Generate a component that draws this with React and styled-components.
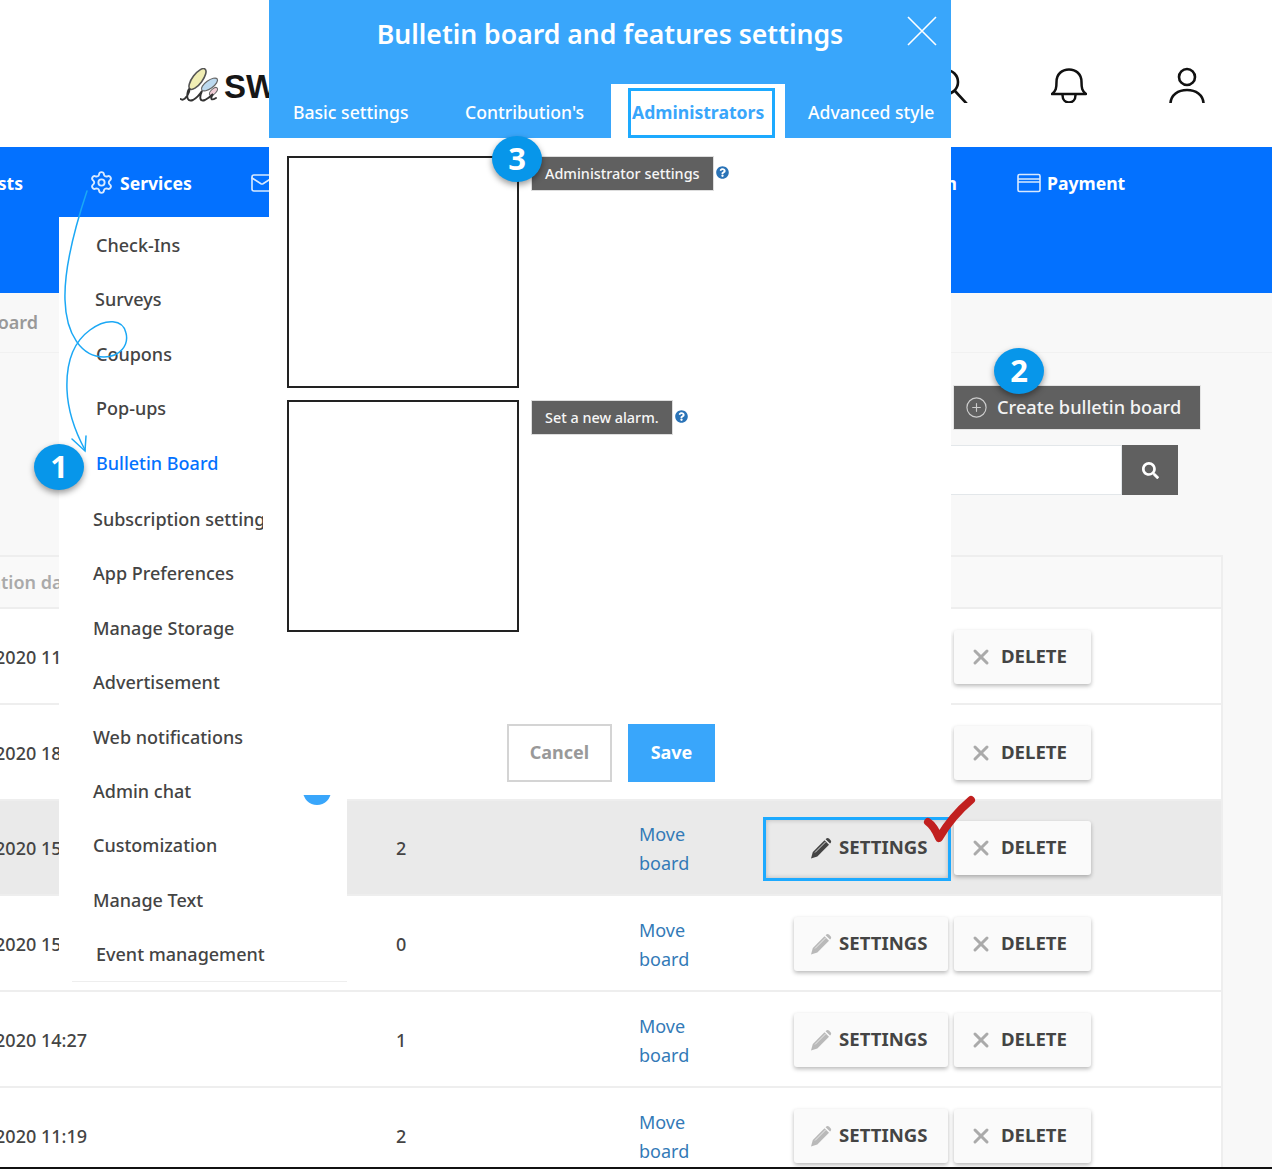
import React from "react";
import styled, { createGlobalStyle } from "styled-components";
import { Settings, Mail, CirclePlus, X } from "lucide-react";
import { FaQuestionCircle, FaSearch } from "react-icons/fa";

const Global = createGlobalStyle`
  html, body { margin: 0; padding: 0; background: #fff; }
  * { box-sizing: border-box; }
`;

const Page = styled.div`
  position: relative;
  width: 1272px;
  height: 1169px;
  overflow: hidden;
  display: flex;
  flex-direction: column;
  background: #f8f8f8;
  font-family: "Noto Sans", "Open Sans", sans-serif;
  font-weight: 500;
  font-size: 18px;
  color: #444;
  border-bottom: 2px solid #111;
`;

const Header = styled.header`
  flex: 0 0 147px;
  background: #fff;
  display: flex;
  align-items: flex-start;
  padding: 67px 67px 0 180px;
`;
const Logo = styled.div`
  display: flex;
  align-items: center;
  margin-top: -1px;
`;
const LogoText = styled.span`
  font-family: "Liberation Sans", sans-serif;
  font-size: 33px;
  line-height: 36px;
  font-weight: 700;
  color: #161616;
  margin-top: 3px;
  margin-left: -1px;
`;
const HeaderIcons = styled.div`
  margin-left: auto;
  display: flex;
  gap: 82px;
  svg { display: block; }
`;

const Nav = styled.nav`
  flex: 0 0 146px;
  background: #0371ff;
  display: grid;
  grid-template-columns: 89px 161px 300px 407px auto;
  align-content: start;
  padding-top: 23.5px;
  color: #fff;
  font-weight: 700;
  font-size: 17.6px;
`;
const NavItem = styled.div`
  display: flex;
  align-items: center;
  gap: 6px;
  height: 24px;
  white-space: nowrap;
  justify-content: ${(p) => (p.$end ? "flex-end" : "flex-start")};
  width: ${(p) => p.$w || "auto"};
  margin-left: ${(p) => p.$ml || "0"};
  svg { flex: none; opacity: 0.85; }
`;

const Crumb = styled.div`
  flex: 0 0 60px;
  border-bottom: 1px solid #f1f1f1;
  display: flex;
  align-items: center;
  color: #999;
`;
const CrumbText = styled.div`
  width: 38px;
  display: flex;
  justify-content: flex-end;
  white-space: nowrap;
  margin-top: -1px;
  font-weight: 600;
`;

const Toolbar = styled.div`
  flex: 0 0 202px;
  display: flex;
  flex-direction: column;
  align-items: flex-end;
  padding-top: 32px;
`;
const CreateButton = styled.button`
  width: 248px;
  height: 45px;
  margin-right: 71px;
  background: #606060;
  border: 1px solid #e4e4e4;
  color: #f4f4f4;
  font: inherit;
  font-size: 18.2px;
  display: flex;
  align-items: center;
  gap: 9px;
  padding: 0 0 2px 11px;
  white-space: nowrap;
  svg { margin-top: 2px; }
`;
const SearchRow = styled.div`
  margin: 15px 94px 0 0;
  display: flex;
  height: 50px;
`;
const SearchInput = styled.div`
  width: 400px;
  background: #fff;
  border: 1px solid #e3e7ea;
`;
const SearchButton = styled.button`
  width: 56px;
  background: #606060;
  border: 0;
  color: #fff;
  display: flex;
  align-items: center;
  justify-content: center;
  padding: 0;
`;

const Table = styled.div`
  margin-right: 49px;
  border-right: 2px solid #eee;
  background: #fff;
`;
const HeadRow = styled.div`
  height: 54px;
  background: #f9f9f9;
  border-top: 2px solid #eee;
  border-bottom: 2px solid #eee;
  display: flex;
  align-items: center;
  color: #aaa;
  font-weight: 600;
`;
const HeadCell = styled.div`
  margin-left: -39px;
  margin-top: -1px;
  white-space: nowrap;
`;
const Row = styled.div`
  height: 95.75px;
  padding-top: 2px;
  display: grid;
  grid-template-columns: 396px 243px 60px 1fr;
  align-items: center;
  background: ${(p) => (p.$active ? "#eaeaea" : "#fff")};
  border-bottom: 2px solid #eee;
`;
const DateCell = styled.div`
  width: 87px;
  display: flex;
  justify-content: flex-end;
  white-space: nowrap;
`;
const MoveLink = styled.a`
  display: block;
  color: #337ab7;
  width: 60px;
  padding-top: 2px;
  line-height: 29px;
  font-weight: 400;
`;
const Actions = styled.div`
  justify-self: end;
  display: flex;
  gap: 6px;
  padding-right: 130px;
`;
const ActionButton = styled.button`
  position: relative;
  width: ${(p) => p.$w};
  height: 54px;
  background: ${(p) => (p.$outlined ? "transparent" : "#fafafa")};
  border: 0;
  border-radius: 3px;
  box-shadow: ${(p) => (p.$outlined ? "none" : "0 2px 4px rgba(0, 0, 0, 0.28)")};
  color: #444;
  font: inherit;
  font-weight: 700;
  font-size: 18.6px;
  display: flex;
  align-items: center;
  gap: ${(p) => p.$gap};
  padding: 0 0 3px ${(p) => p.$pad};
  white-space: nowrap;
  svg { flex: none; margin-top: 3px; }
  ${(p) =>
    p.$outlined &&
    `&::after {
      content: "";
      position: absolute;
      top: -4px;
      bottom: -6px;
      left: -31px;
      right: -3px;
      border: 3px solid #1daaff;
      box-shadow: inset 0 0 5px rgba(0, 0, 0, 0.22);
    }`}
`;

const Menu = styled.div`
  position: absolute;
  left: 59px;
  top: 217px;
  width: 288px;
  height: 765px;
  background: #fff;
  padding-top: 1px;
  &::after {
    content: "";
    position: absolute;
    left: 13px;
    right: 0;
    bottom: 0;
    height: 1px;
    background: #eee;
  }
`;
const MenuItem = styled.div`
  position: relative;
  height: 54.4px;
  line-height: 54.4px;
  padding-left: ${(p) => p.$indent}px;
  margin-top: ${(p) => p.$gap || 0}px;
  color: ${(p) => (p.$current ? "#0371ff" : "#444")};
  white-space: nowrap;
`;
const Clip = styled.span`
  display: inline-block;
  vertical-align: top;
  max-width: 170px;
  overflow: hidden;
`;
const MenuBadge = styled.span`
  position: absolute;
  right: 16px;
  top: 13px;
  width: 28px;
  height: 28px;
  border-radius: 50%;
  background: #39a6fb;
`;

const Modal = styled.section`
  position: absolute;
  left: 269px;
  top: 0;
  width: 682px;
  height: 795px;
  background: #fff;
  display: flex;
  flex-direction: column;
`;
const ModalHead = styled.div`
  position: relative;
  height: 138px;
  background: #39a6fb;
  color: #fff;
  display: flex;
  flex-direction: column;
  font-size: 17.6px;
`;
const ModalTitle = styled.h2`
  margin: 0;
  height: 84px;
  padding-top: 14px;
  font-size: 26.6px;
  line-height: 40px;
  font-weight: 600;
  text-align: center;
`;
const CloseIcon = styled.svg`
  position: absolute;
  top: 16px;
  right: 14px;
`;
const Tabs = styled.div`
  display: grid;
  grid-template-columns: 168px 174px 174px 166px;
  height: 54px;
`;
const Tab = styled.div`
  padding-left: ${(p) => p.$pad}px;
  line-height: 57px;
  white-space: nowrap;
`;
const ActiveTab = styled.div`
  background: #fff;
  padding: 4px 10px 0 17px;
`;
const ActiveTabBox = styled.div`
  height: 50px;
  border: 3px solid #1daaff;
  color: #39a6fb;
  font-weight: 700;
  line-height: 42px;
  white-space: nowrap;
  padding-left: 1px;
`;
const ModalBody = styled.div`
  padding: 18px 0 0 18px;
  display: flex;
  flex-direction: column;
  gap: 12px;
`;
const SettingRow = styled.div`
  display: flex;
  align-items: flex-start;
  gap: 12px;
`;
const EmptyBox = styled.div`
  width: 232px;
  height: 232px;
  border: 2px solid #222;
  background: #fff;
`;
const Chip = styled.div`
  height: 35px;
  background: #606060;
  border: 1px solid #ddd;
  color: #f6f6f6;
  font-size: 14.4px;
  font-weight: 500;
  line-height: 33px;
  padding: 0 13px;
  white-space: nowrap;
`;
const Help = styled.span`
  color: #2a73b7;
  margin: 10px 0 0 -10px;
  display: flex;
`;
const ModalFooter = styled.div`
  margin-top: 92px;
  padding-left: 2px;
  display: flex;
  justify-content: center;
  gap: 16px;
`;
const Cancel = styled.button`
  width: 105px;
  height: 58px;
  background: #fff;
  border: 2px solid #d4d4d4;
  color: #999;
  font: inherit;
  font-weight: 700;
  padding: 0 0 2px;
`;
const Save = styled.button`
  width: 87px;
  height: 58px;
  background: #39a6fb;
  border: 0;
  color: #fff;
  font: inherit;
  font-weight: 700;
  padding: 0 0 2px;
`;

const Step = styled.div`
  position: absolute;
  left: ${(p) => p.$x - 25}px;
  top: ${(p) => p.$y - 23}px;
  width: 50px;
  height: 46px;
  border-radius: 50%;
  background: #0796ea;
  box-shadow: 0 3px 6px rgba(0, 0, 0, 0.4);
  color: #fff;
  font-size: 31px;
  font-weight: 700;
  line-height: 44px;
  text-align: center;
`;
const Overlay = styled.svg`
  position: absolute;
  left: ${(p) => p.$x}px;
  top: ${(p) => p.$y}px;
  pointer-events: none;
`;

const rows = [
  { date: "2020 11:42", count: "3" },
  { date: "2020 18:06", count: "1" },
  { date: "2020 15:31", count: "2", active: true },
  { date: "2020 15:04", count: "0" },
  { date: "2020 14:27", count: "1" },
  { date: "2020 11:19", count: "2" },
];

const menu = [
  ["Check-Ins", 37],
  ["Surveys", 36],
  ["Coupons", 37],
  ["Pop-ups", 37],
  ["Bulletin Board", 37],
  ["Subscription settings", 34],
  ["App Preferences", 34],
  ["Manage Storage", 34],
  ["Advertisement", 34],
  ["Web notifications", 34],
  ["Admin chat", 34],
  ["Customization", 34],
  ["Manage Text", 34],
  ["Event management", 37],
];

const SearchGlyph = () => (
  <svg width="36" height="36" viewBox="0 0 36 36" fill="none" stroke="#111" strokeWidth="2.6" strokeLinecap="round">
    <circle cx="13" cy="15" r="12" />
    <path d="M22 24 L34 37" />
  </svg>
);
const Bell = () => (
  <svg width="36" height="36" viewBox="0 0 36 36" fill="none" stroke="#111" strokeWidth="2.5" strokeLinecap="round" strokeLinejoin="round">
    <path d="M1 27 H35 C31 24 30.5 21 30.5 15 C30.5 7 25 2.5 18 2.5 C11 2.5 5.5 7 5.5 15 C5.5 21 5 24 1 27 Z" />
    <path d="M11.5 28 C11.5 38 24.5 38 24.5 28" />
  </svg>
);
const User = () => (
  <svg width="36" height="36" viewBox="0 0 36 36" fill="none" stroke="#111" strokeWidth="2.6" strokeLinecap="round">
    <circle cx="18" cy="10" r="8" />
    <path d="M1.5 36 C2 28 9 23 18 23 C27 23 34 28 34.5 36" />
  </svg>
);
const Card = () => (
  <svg width="24" height="20" viewBox="0 0 24 20" fill="none" stroke="#fff" strokeWidth="1.6">
    <rect x="1" y="1.5" width="22" height="17" rx="1.5" />
    <path d="M1 6 H23 M1 9 H23" />
  </svg>
);
const LogoMark = () => (
  <svg width="45" height="36" viewBox="0 0 45 36" fill="none">
    <ellipse cx="17.5" cy="11" rx="5" ry="12.5" transform="rotate(37 17.5 11)" fill="#f0edb4" stroke="#555" strokeWidth="1.6" />
    <ellipse cx="29.5" cy="16.5" rx="4" ry="9.5" transform="rotate(54 29.5 16.5)" fill="#bcd9ef" stroke="#666" strokeWidth="1.2" />
    <ellipse cx="33.5" cy="23.5" rx="2.5" ry="5" transform="rotate(45 33.5 23.5)" fill="#f0cdd6" stroke="#666" strokeWidth="1" />
    <path
      d="M0.5 31 C3 33 7 30 9 24 C10 21 9 20 8 23 C6 30 8 34 13 32 C17 30 20 26 22 23 C19 30 20 34 25 32 C29 30 31 28 33 26 C30 31 31 33 36 30"
      stroke="#333"
      strokeWidth="1.9"
      strokeLinecap="round"
    />
  </svg>
);
const PencilGlyph = ({ dark }) => {
  const fill = dark ? "#444" : "#b9b9b9";
  return (
    <svg width="22" height="22" viewBox="0 0 22 22">
      <path d="M1 21.5 L2.8 15 L14.5 3.3 L19 7.8 L7.3 19.5 Z" fill={fill} />
      <path d="M16 1.8 C17 0.8 18 0.8 19 1.6 L20.6 3.2 C21.4 4.2 21.4 5.2 20.4 6.2 L20 6.6 L15.6 2.2 Z" fill={fill} />
      <path d="M5 15.5 L15.5 5" stroke={dark ? "#eaeaea" : "#ececec"} strokeWidth="0.9" />
    </svg>
  );
};

export default function App() {
  return (
    <>
      <Global />
      <Page>
        <Header>
          <Logo>
            <LogoMark />
            <LogoText>SW</LogoText>
          </Logo>
          <HeaderIcons>
            <SearchGlyph />
            <Bell />
            <User />
          </HeaderIcons>
        </Header>

        <Nav>
          <NavItem $w="23px" $end>Requests</NavItem>
          <NavItem>
            <Settings size={25} strokeWidth={1.8} />
            Services
          </NavItem>
          <NavItem><Mail size={24} strokeWidth={1.6} />Mail</NavItem>
          <NavItem $end>Administration</NavItem>
          <NavItem $ml="60px"><Card />Payment</NavItem>
        </Nav>

        <Crumb><CrumbText>Bulletin board</CrumbText></Crumb>

        <Toolbar>
          <CreateButton>
            <CirclePlus size={23} strokeWidth={1.2} color="#ccc" />
            Create bulletin board
          </CreateButton>
          <SearchRow>
            <SearchInput />
            <SearchButton><FaSearch size={17} /></SearchButton>
          </SearchRow>
        </Toolbar>

        <Table>
          <HeadRow><HeadCell>Creation date</HeadCell></HeadRow>
          {rows.map((r) => (
            <Row key={r.date} $active={r.active}>
              <DateCell>{r.date}</DateCell>
              <div>{r.count}</div>
              <MoveLink>Move board</MoveLink>
              <Actions>
                <ActionButton $w="154px" $pad="16px" $gap="7px" $outlined={r.active}>
                  <PencilGlyph dark={r.active} />
                  SETTINGS
                </ActionButton>
                <ActionButton $w="137px" $pad="15px" $gap="8px">
                  <X size={24} strokeWidth={3} color="#aaa" />
                  DELETE
                </ActionButton>
              </Actions>
            </Row>
          ))}
        </Table>

        <Menu>
          {menu.map(([label, indent], i) => (
            <MenuItem key={label} $indent={indent} $current={i === 4} $gap={i === 5 ? 2 : 0}>
              {i === 5 ? <Clip>{label}</Clip> : label}
              {i === 10 && <MenuBadge />}
            </MenuItem>
          ))}
        </Menu>

        <Modal>
          <ModalHead>
            <ModalTitle>Bulletin board and features settings</ModalTitle>
            <CloseIcon width="30" height="30" viewBox="0 0 30 30" stroke="#fff" strokeWidth="1.6">
              <path d="M1 1 L29 29 M29 1 L1 29" />
            </CloseIcon>
            <Tabs>
              <Tab $pad={24}>Basic settings</Tab>
              <Tab $pad={28}>Contribution's</Tab>
              <ActiveTab><ActiveTabBox>Administrators</ActiveTabBox></ActiveTab>
              <Tab $pad={23}>Advanced style</Tab>
            </Tabs>
          </ModalHead>
          <ModalBody>
            <SettingRow>
              <EmptyBox />
              <Chip>Administrator settings</Chip>
              <Help><FaQuestionCircle size={13} /></Help>
            </SettingRow>
            <SettingRow>
              <EmptyBox />
              <Chip>Set a new alarm.</Chip>
              <Help><FaQuestionCircle size={13} /></Help>
            </SettingRow>
          </ModalBody>
          <ModalFooter>
            <Cancel>Cancel</Cancel>
            <Save>Save</Save>
          </ModalFooter>
        </Modal>

        <Overlay $x={60} $y={185} width="80" height="275" viewBox="0 0 80 275" fill="none" stroke="#1ba8f5" strokeWidth="1.5" strokeLinecap="round">
          <path d="M27 6 C14 45 4 85 5 115 C6 150 22 172 44 172 C60 172 69 160 66 148 C63 134 46 133 30 145 C12 158 6 180 7 205 C8 230 17 250 25 265" />
          <path d="M12 254 L25 266 L26 251" />
        </Overlay>

        <Overlay $x={918} $y={790} width="62" height="56" viewBox="0 0 62 56" fill="none" stroke="#c1201f" strokeWidth="8" strokeLinecap="round" strokeLinejoin="round">
          <path d="M10 32 Q16 36 21 48 Q34 26 53 10" />
        </Overlay>

        <Step $x={59} $y={467}>1</Step>
        <Step $x={1019} $y={371}>2</Step>
        <Step $x={517} $y={159}>3</Step>
      </Page>
    </>
  );
}
